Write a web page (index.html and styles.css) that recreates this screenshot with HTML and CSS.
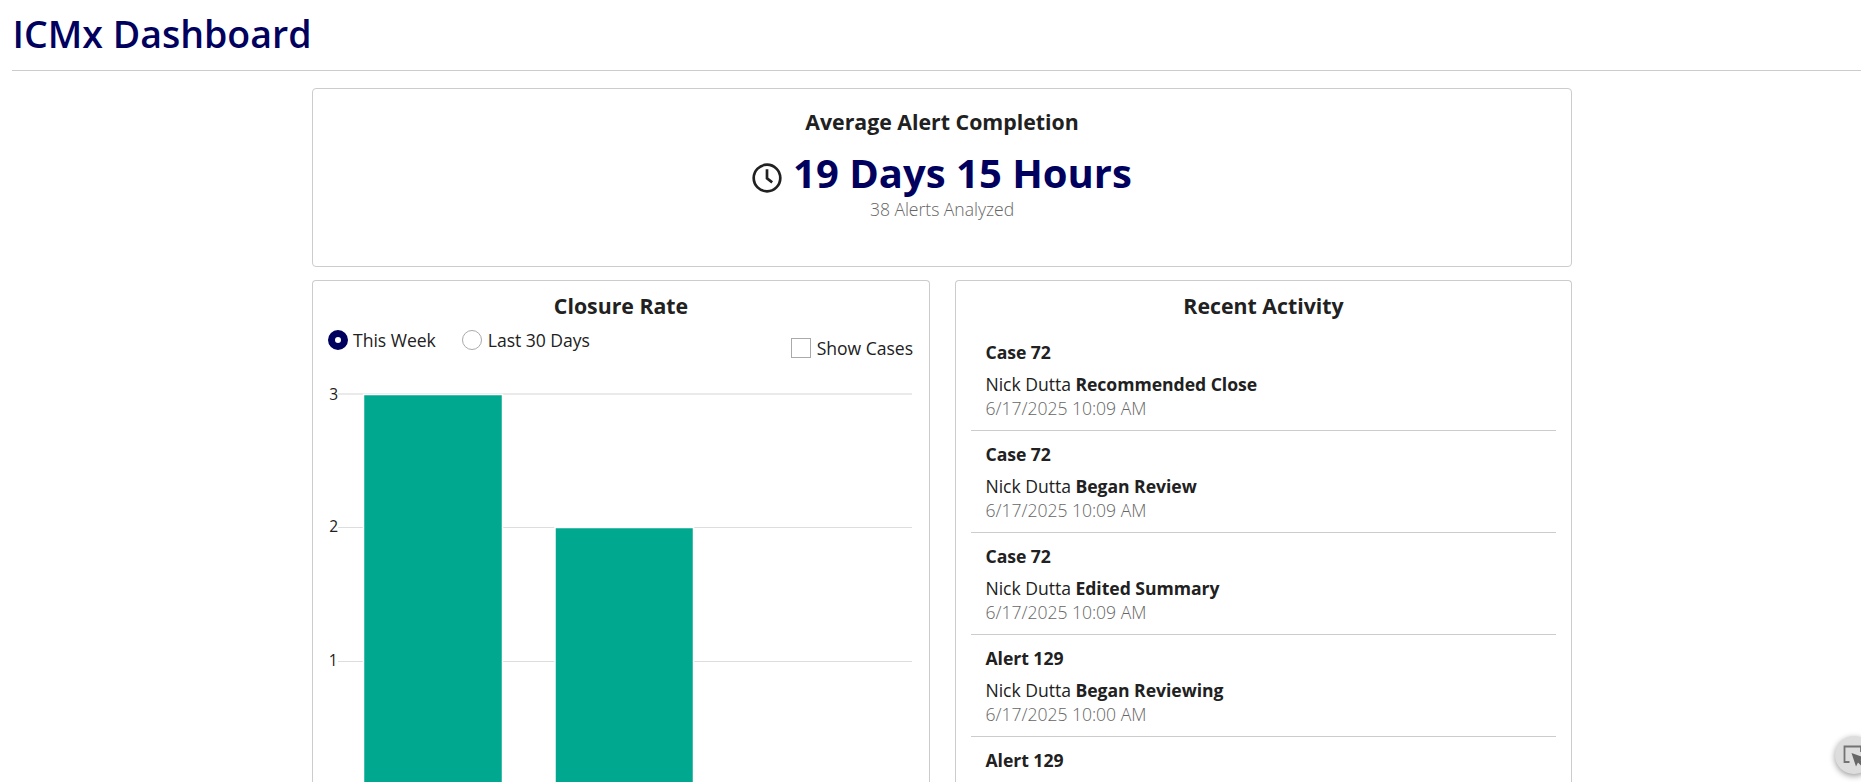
FILE: index.html
```html
<!DOCTYPE html>
<html lang="en">
<head>
<meta charset="utf-8">
<title>ICMx Dashboard</title>
<link rel="stylesheet" href="styles.css">
</head>
<body>
<header class="page-header"><h1 class="page-title">ICMx Dashboard</h1></header>
<main class="dashboard">
  <section class="card summary">
    <h2 class="card-title">Average Alert Completion</h2>
    <div class="metric">
      <svg class="clock" viewBox="0 0 30 30" aria-hidden="true"><circle cx="15" cy="15" r="13.3"/><path d="M15 6.200v9.200l5.200 4"/></svg>
      <span class="metric-value">19 Days 15 Hours</span>
    </div>
    <p class="metric-note">38 Alerts Analyzed</p>
  </section>
  <section class="card closure">
    <h2 class="card-title">Closure Rate</h2>
    <div class="controls">
      <div class="radios">
        <label class="option week"><span class="radio selected"></span><span>This Week</span></label>
        <label class="option month"><span class="radio"></span><span>Last 30 Days</span></label>
      </div>
      <label class="option cases"><span class="checkbox"></span><span>Show Cases</span></label>
    </div>
    <svg class="chart" viewBox="0 0 590 404" role="img" aria-label="Closures">
      <g class="grid">
        <path class="grid-top" d="M13 14H587"/>
        <path d="M13 147.500H587M13 281.500H587"/>
      </g>
      <g class="bars">
        <rect x="38.500" y="14.500" width="139" height="401"/>
        <rect x="230" y="147.500" width="138.500" height="268"/>
      </g>
      <g class="ticks">
        <text x="13" y="20">3</text>
        <text x="13" y="152">2</text>
        <text x="12.500" y="286">1</text>
      </g>
    </svg>
  </section>
  <section class="card activity">
    <h2 class="card-title">Recent Activity</h2>
    <ul class="feed">
      <li class="entry"><h3 class="entry-title">Case 72</h3><p>Nick Dutta <b>Recommended Close</b></p><p class="time">6/17/2025 10:09 AM</p></li>
      <li class="entry"><h3 class="entry-title">Case 72</h3><p>Nick Dutta <b>Began Review</b></p><p class="time">6/17/2025 10:09 AM</p></li>
      <li class="entry"><h3 class="entry-title">Case 72</h3><p>Nick Dutta <b>Edited Summary</b></p><p class="time">6/17/2025 10:09 AM</p></li>
      <li class="entry"><h3 class="entry-title">Alert 129</h3><p>Nick Dutta <b>Began Reviewing</b></p><p class="time">6/17/2025 10:00 AM</p></li>
      <li class="entry last"><h3 class="entry-title">Alert 129</h3></li>
    </ul>
  </section>
</main>
<button class="picker" aria-label="Select element">
  <svg viewBox="0 0 38 38" aria-hidden="true"><path class="frame" d="M14.500 26H9.500V10.500H26V16"/><path class="pointer" d="M16.500 17l14 5-5 2 5.500 5.500-2.500 2.500-5.500-5.500-2 4z"/></svg>
</button>
</body>
</html>
```
FILE: styles.css
```css
* { box-sizing: border-box; margin: 0; padding: 0; }
html, body { height: 100%; }
body {
  overflow: hidden;
  background: #fff;
  color: #212121;
  font: 400 17.600px/24px "Open Sans", "Noto Sans", sans-serif;
  letter-spacing: -0.040px;
}
.page-header {
  height: 71px;
  margin-left: 12px;
  padding-top: 8px;
  border-bottom: 1px solid #ccc;
}
.page-title { padding-left: 0.500px; color: #00005e; font-size: 37.500px; line-height: 52px; font-weight: 600; letter-spacing: 0; }
.dashboard {
  display: grid;
  grid-template-columns: 618px 617px;
  grid-template-rows: 179px 502px;
  column-gap: 25px;
  row-gap: 13px;
  width: 1260px;
  margin: 17px 0 0 312px;
}
.card { border: 1px solid #ccc; border-radius: 4px; }
.card-title { text-align: center; font-size: 21.300px; line-height: 30px; font-weight: 700; letter-spacing: 0; }
.summary { grid-column: 1 / 3; padding-top: 18px; text-align: center; }
.metric { display: flex; justify-content: center; gap: 11px; margin-top: 9px; height: 51px; }
.metric-value { color: #00005e; font-size: 40px; line-height: 54px; font-weight: 700; letter-spacing: 0; }
.clock { width: 30px; height: 30px; margin-top: 17px; fill: none; stroke: #212121; stroke-width: 2.700; }
.metric-note { color: #666; font-weight: 300; }
.closure, .activity { padding: 10px 15px 0; border-bottom: 0; border-radius: 4px 4px 0 0; overflow: hidden; }
.controls { display: flex; justify-content: space-between; height: 48px; margin-top: 7px; padding: 0 1px 0 0; }
.radios { display: flex; }
.option { display: flex; height: 24px; gap: 5px; }
.week { margin-right: 26px; }
.month { gap: 6px; }
.cases { margin-top: 8px; gap: 6px; }
.radio { width: 20px; height: 20px; margin-top: 2px; border: 1px solid #aaa; border-radius: 50%; }
.radio.selected { border: 7px solid #00005e; }
.checkbox { width: 20px; height: 20px; margin-top: 2px; border: 1px solid #aaa; }
.chart { display: block; width: 590px; height: 404px; margin-left: -3px; margin-top: 4px; }
.grid { fill: none; stroke: #ddd; stroke-width: 1; }
.grid-top { stroke: #eaeaea; stroke-width: 2; }
.bars { fill: #00a88f; stroke: #fff; stroke-width: 1.500; }
.ticks { fill: #212121; font-size: 15.500px; text-anchor: end; }
.feed { list-style: none; margin-top: 8px; }
.entry { height: 102px; padding: 11px 15px 0 14.500px; border-bottom: 1px solid #ccc; }
.entry.last { height: 45px; border-bottom: 0; }
.entry-title { margin-bottom: 8px; font-size: 17.600px; font-weight: 700; }
.time { color: #666; font-weight: 300; }
.picker {
  position: fixed;
  left: 1835px;
  top: 736px;
  width: 38px;
  height: 38px;
  border: 0;
  border-radius: 50%;
  background: #ddd;
  box-shadow: 0 2px 6px rgba(0, 0, 0, .4);
}
.picker svg { display: block; width: 38px; height: 38px; }
.frame { fill: none; stroke: #737373; stroke-width: 1.800; }
.pointer { fill: #666; }
```
